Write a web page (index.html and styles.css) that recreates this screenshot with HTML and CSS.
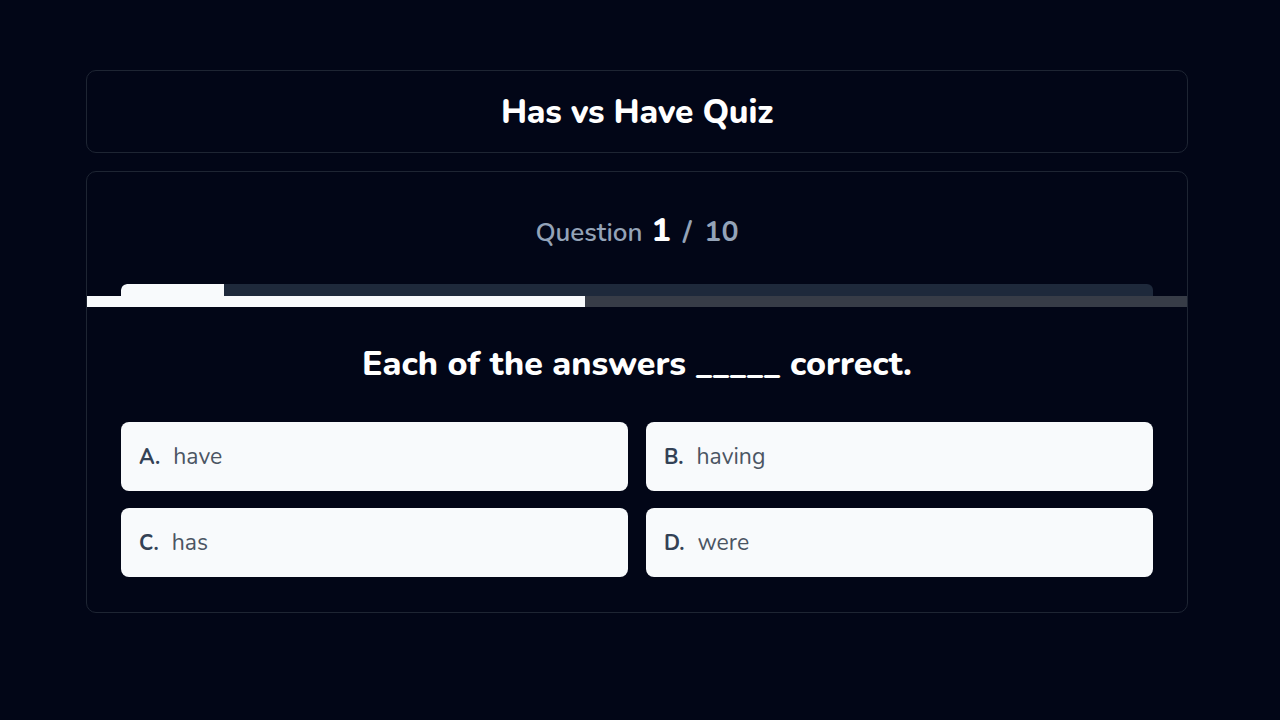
FILE: index.html
```html
<!DOCTYPE html>
<html>
<head>
<meta charset="utf-8">
<link rel="stylesheet" href="styles.css">
</head>
<body>
<div class="page">
  <header class="card title-card">
    <h1 class="title">Has vs Have Quiz</h1>
  </header>
  <main class="card quiz-card">
    <div class="counter">
      <span class="counter-label">Question</span>
      <span class="counter-num">1</span>
      <span class="counter-total">/ 10</span>
    </div>
    <div class="progress-wrap">
      <div class="progress"><div class="progress-fill" style="width:10%"></div></div>
    </div>
    <div class="timer"><div class="timer-fill" style="width:45.3%"></div></div>
    <h2 class="question">Each of the answers _____ correct.</h2>
    <div class="options">
      <button class="option"><span class="letter">A.</span><span class="text">have</span></button>
      <button class="option"><span class="letter">B.</span><span class="text">having</span></button>
      <button class="option"><span class="letter">C.</span><span class="text">has</span></button>
      <button class="option"><span class="letter">D.</span><span class="text">were</span></button>
    </div>
  </main>
</div>
</body>
</html>
```
FILE: styles.css
```css
* { box-sizing: border-box; }
html, body { margin: 0; padding: 0; }
body {
  background: #020617;
  font-family: "Nunito", "Lato", "Open Sans", sans-serif;
  color: #f8fafc;
  width: 1280px;
  height: 720px;
  overflow: hidden;
}
.page {
  padding: 70px 92px 0 86px;
  display: flex;
  flex-direction: column;
  gap: 18px;
}
.card {
  border: 1px solid #1e2533;
  border-radius: 10px;
  background: #020617;
}
.title-card {
  height: 83px;
  display: flex;
  align-items: center;
  justify-content: center;
}
.title {
  margin: 0;
  font-size: 33.5px;
  font-weight: 800;
  letter-spacing: -0.2px;
  color: #ffffff;
}
.quiz-card {
  padding: 0 0 35px 0;
  overflow: hidden;
}
.counter {
  display: flex;
  justify-content: center;
  align-items: baseline;
  margin-top: 37px;
  height: 43px;
}
.counter-label {
  font-size: 26px;
  font-weight: 600;
  color: #94a3b8;
  margin-right: 9px;
}
.counter-num {
  font-size: 32px;
  font-weight: 800;
  color: #ffffff;
  margin-right: 12px;
}
.counter-total {
  font-size: 28.5px;
  font-weight: 700;
  color: #94a3b8;
  word-spacing: 5px;
}
.progress-wrap {
  padding: 0 34px;
  margin-top: 32px;
}
.progress {
  height: 12px;
  background: #1e293b;
  border-radius: 6px 6px 0 0;
  overflow: hidden;
}
.progress-fill {
  height: 100%;
  background: #f8fafc;
  border-radius: 6px 0 0 0;
}
.timer {
  height: 11px;
  background: #373c47;
}
.timer-fill {
  height: 100%;
  background: #f8fafc;
}
.question {
  margin: 37px 0 0 0;
  text-align: center;
  font-size: 34px;
  font-weight: 800;
  color: #ffffff;
  letter-spacing: 0;
  line-height: 40px;
}
.options {
  display: grid;
  grid-template-columns: 1fr 1fr;
  gap: 17px 18px;
  padding: 0 34px;
  margin-top: 38px;
}
.option {
  height: 69px;
  border: none;
  border-radius: 8px;
  background: #f8fafc;
  display: flex;
  align-items: center;
  padding: 0 18px;
  font-family: "Nunito", "Lato", "Open Sans", sans-serif;
  text-align: left;
}
.letter {
  font-size: 21px;
  font-weight: 700;
  color: #334155;
  margin-right: 13px;
}
.text {
  font-size: 23px;
  color: #4b5563;
  font-weight: 400;
}
```
